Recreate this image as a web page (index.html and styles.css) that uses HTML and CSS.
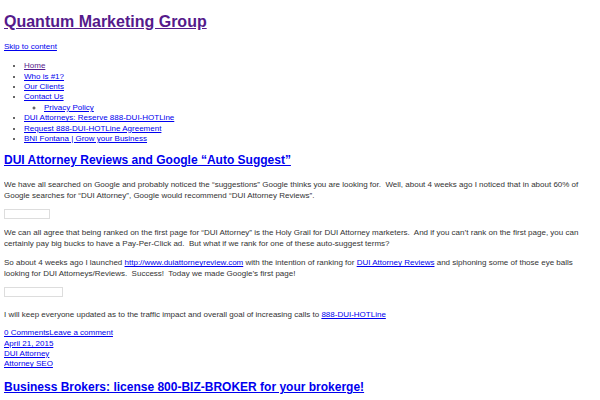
FILE: index.html
```html
<!DOCTYPE html>
<html lang="en">
<head>
<meta charset="utf-8">
<title>Quantum Marketing Group</title>
<link rel="stylesheet" href="styles.css">
</head>
<body>
<header class="site-header">
  <h1 class="site-title"><a class="visited" href="#">Quantum Marketing Group</a></h1>
  <a class="skip-link" href="#content">Skip to content</a>
  <ul class="menu">
    <li><a class="visited" href="#">Home</a></li>
    <li><a href="#">Who is #1?</a></li>
    <li><a href="#">Our Clients</a></li>
    <li><a href="#">Contact Us</a>
      <ul class="sub-menu">
        <li><a href="#">Privacy Policy</a></li>
      </ul>
    </li>
    <li><a href="#">DUI Attorneys: Reserve 888-DUI-HOTLine</a></li>
    <li><a href="#">Request 888-DUI-HOTLine Agreement</a></li>
    <li><a href="#">BNI Fontana | Grow your Business</a></li>
  </ul>
</header>
<main id="content">
  <article class="post">
    <h2 class="entry-title"><a href="#">DUI Attorney Reviews and Google “Auto Suggest”</a></h2>
    <p>We have all searched on Google and probably noticed the “suggestions” Google thinks you are looking for.&nbsp; Well, about 4 weeks ago I noticed that in about 60% of Google searches for “DUI Attorney”, Google would recommend “DUI Attorney Reviews”.</p>
    <div class="embed embed-short"></div>
    <p>We can all agree that being ranked on the first page for “DUI Attorney” is the Holy Grail for DUI Attorney marketers.&nbsp; And if you can’t rank on the first page, you can certainly pay big bucks to have a Pay-Per-Click ad.&nbsp; But what if we rank for one of these auto-suggest terms?</p>
    <p>So about 4 weeks ago I launched <a href="#">http://www.duiattorneyreview.com</a> with the intention of ranking for <a href="#">DUI Attorney Reviews</a> and siphoning some of those eye balls looking for DUI Attorneys/Reviews.&nbsp; Success!&nbsp; Today we made Google’s first page!</p>
    <div class="embed embed-long"></div>
    <p>I will keep everyone updated as to the traffic impact and overall goal of increasing calls to <a href="#">888-DUI-HOTLine</a></p>
    <footer class="entry-meta">
      <div><a href="#">0 Comments</a><a href="#">Leave a comment</a></div>
      <div><a href="#">April 21, 2015</a></div>
      <div><a href="#">DUI Attorney</a></div>
      <div><a href="#">Attorney SEO</a></div>
    </footer>
  </article>
  <article class="post">
    <h2 class="entry-title"><a href="#">Business Brokers: license 800-BIZ-BROKER for your brokerge!</a></h2>
  </article>
</main>
</body>
</html>
```

FILE: styles.css
```css
html, body {
  background: #ffffff;
}
body {
  margin: 4px;
  font-family: "Liberation Sans", Arial, Helvetica, sans-serif;
  font-size: 8px;
  line-height: 1.3;
  color: #333333;
}
a {
  color: #0000ee;
  text-decoration: underline;
}
a.visited {
  color: #551a8b;
}
.site-title {
  font-size: 16px;
  font-weight: bold;
  line-height: 18.4px;
  margin: 9px 0 11px;
}
.skip-link {
  display: block;
}
.menu {
  margin: 8.5px 0 0;
  padding-left: 20px;
  list-style: disc;
}
.sub-menu {
  margin: 0;
  padding-left: 20px;
  list-style: circle;
}
.entry-title {
  font-size: 12px;
  font-weight: bold;
  line-height: 13.8px;
  margin: 10px 0 11px;
}
.post p {
  margin: 0 0 8px;
  line-height: 11px;
}
.embed {
  box-sizing: border-box;
  height: 10px;
  border: 1px solid #dddddd;
  margin: 0 0 8px;
}
.embed-short {
  width: 46px;
}
.embed-long {
  width: 59px;
  margin-top: 1px;
  margin-bottom: 12px;
}
.entry-meta {
  line-height: 10.4px;
  margin-bottom: 11px;
}
.post + .post .entry-title {
  margin-top: 0;
}
```
